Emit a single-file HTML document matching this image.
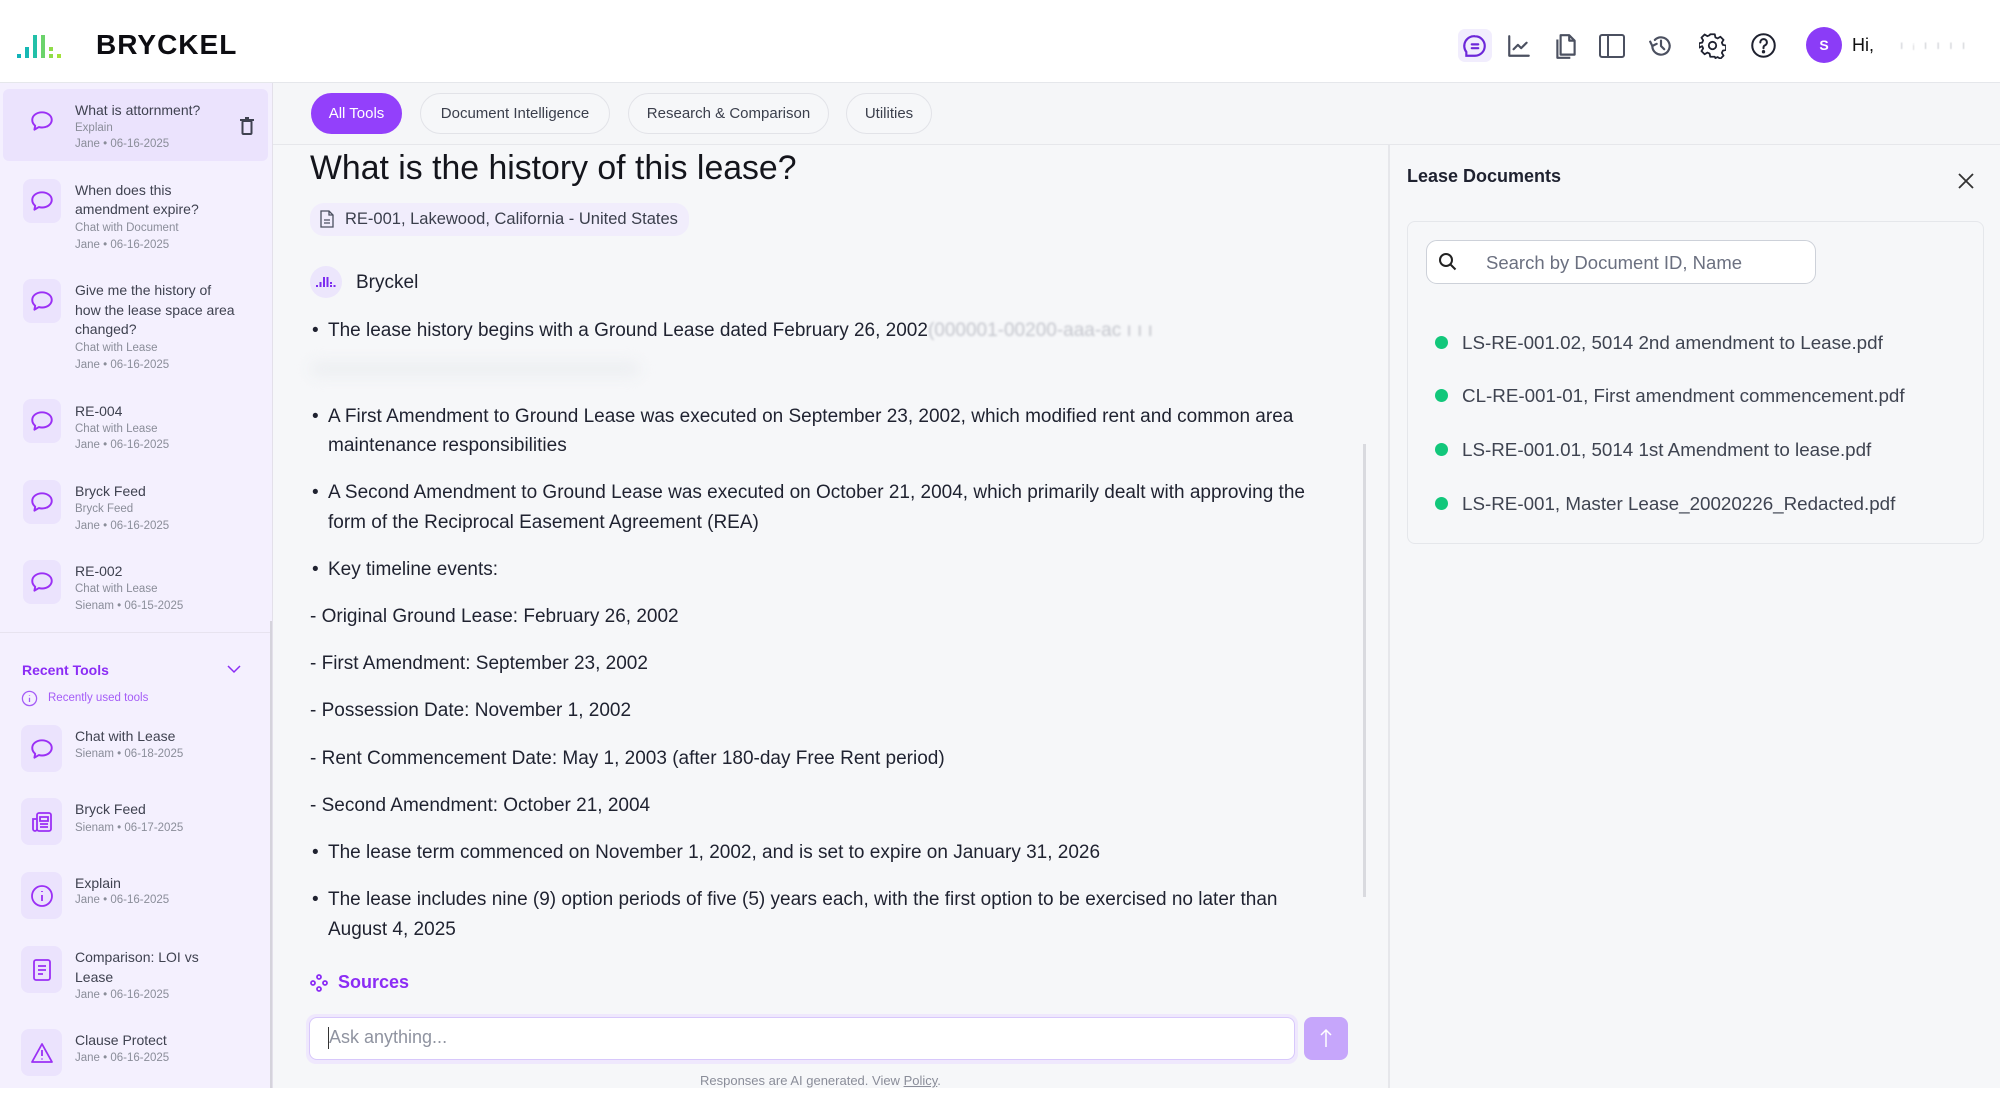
<!DOCTYPE html>
<html><head><meta charset="utf-8">
<style>
*{box-sizing:border-box;margin:0;padding:0}
body{width:2000px;height:1099px;overflow:hidden;background:#fff;font-family:"Liberation Sans",sans-serif;color:#1f2230;position:relative}
.a{position:absolute;white-space:nowrap}
.hdr{position:absolute;left:0;top:0;width:2000px;height:83px;background:#fff;border-bottom:1px solid #e5e7eb}
.side{position:absolute;left:0;top:83px;width:273px;height:1005px;background:#f4f0fe;border-right:1px solid #e3e0ea;overflow:hidden}
.main{position:absolute;left:273px;top:83px;width:1115px;height:1005px;background:#f6f7f9}
.right{position:absolute;left:1388px;top:145px;width:612px;height:943px;background:#f6f7f9;border-left:2px solid #e6e7eb}
.tabs{position:absolute;left:273px;top:83px;width:1727px;height:62px;background:#f5f6f8;border-bottom:1px solid #e6e7eb}
.pill{position:absolute;top:10px;height:41px;border:1px solid #e2e3e8;border-radius:21px;font-size:15px;color:#3b3f4c;display:flex;align-items:center;justify-content:center;background:#f6f7f9}
.ib{position:absolute;left:23px;width:38px;height:44px;background:#ebe3fd;border-radius:8px;display:flex;align-items:center;justify-content:center}
.t{font-size:14px;color:#3f4250}
.s{font-size:11.5px;color:#8a8d99}
.b{font-size:19px;color:#1f2230}
.doc{font-size:18.8px;color:#3f4451}
.dot{position:absolute;left:1435px;width:13px;height:13px;border-radius:50%;background:#12c77b}
</style></head><body>

<div class="hdr"></div>
<svg class="a" style="left:17px;top:32px" width="58" height="28" viewBox="0 0 58 28">
<rect x="0" y="22" width="4" height="4" fill="#12b3b8"/>
<rect x="8" y="15" width="4" height="11" fill="#16b8b4"/>
<rect x="16" y="3" width="4" height="23" fill="#22c0a8"/>
<rect x="24" y="3" width="4" height="23" fill="#6bd36b"/>
<rect x="32" y="15" width="4" height="4" fill="#8fdc48"/>
<rect x="32" y="22" width="4" height="4" fill="#8fdc48"/>
<rect x="40" y="22" width="4" height="4" fill="#a3e23a"/>
</svg>
<div class="a" style="left:96px;top:29px;font-size:28px;font-weight:bold;letter-spacing:1px;color:#0d0d12">BRYCKEL</div>

<div class="a" style="left:1458px;top:29px;width:34px;height:33px;background:#f1edfd;border-radius:7px"></div>
<svg class="a" style="left:1462px;top:33px" width="26" height="26" viewBox="0 0 24 24" fill="none" stroke="#6d28d9" stroke-width="2" stroke-linecap="round"><path d="M12 3a9 9 0 0 1 0 18H4v-3.5A9 9 0 0 1 12 3z"/><path d="M9 10.5h6M9 14h6"/></svg>
<svg class="a" style="left:1506px;top:33px" width="26" height="26" viewBox="0 0 24 24" fill="none" stroke="#4b5060" stroke-width="2" stroke-linecap="round" stroke-linejoin="round"><path d="M3 3v18h18"/><path d="M7 15l4-4 3 3 5-5"/></svg>
<svg class="a" style="left:1553px;top:32px" width="26" height="28" viewBox="0 0 24 26" fill="none" stroke="#4b5060" stroke-width="2" stroke-linejoin="round"><path d="M7 3h8l5 5v13H7z"/><path d="M15 3v5h5"/><path d="M4 7v17h12"/></svg>
<svg class="a" style="left:1598px;top:33px" width="28" height="26" viewBox="0 0 28 26" fill="none" stroke="#4b5060" stroke-width="2"><rect x="2" y="2" width="24" height="22" rx="2"/><path d="M10 2v22"/></svg>
<svg class="a" style="left:1648px;top:33px" width="26" height="26" viewBox="0 0 24 24" fill="none" stroke="#4b5060" stroke-width="2" stroke-linecap="round" stroke-linejoin="round"><path d="M4 12a8 8 0 1 0 2.3-5.6"/><path d="M2 8l2 4 4-2"/><path d="M12 7v5l3 3"/></svg>
<svg class="a" style="left:1699px;top:32px" width="27" height="27" viewBox="0 0 24 24" fill="none" stroke="#1f2230" stroke-width="1.6" stroke-linejoin="round"><path d="M10 2h4l.6 2.8 2 .9 2.4-1.5 2.8 2.8-1.5 2.4.9 2 2.8.6v4l-2.8.6-.9 2 1.5 2.4-2.8 2.8-2.4-1.5-2 .9L14 22h-4l-.6-2.8-2-.9-2.4 1.5-2.8-2.8 1.5-2.4-.9-2L0 14v-4l2.8-.6.9-2-1.5-2.4 2.8-2.8 2.4 1.5 2-.9z"/><circle cx="12" cy="12" r="3.3"/></svg>
<svg class="a" style="left:1750px;top:32px" width="27" height="27" viewBox="0 0 24 24" fill="none" stroke="#1f2230" stroke-width="1.8" stroke-linecap="round"><circle cx="12" cy="12" r="10"/><path d="M9.2 9.3a2.9 2.9 0 1 1 4 2.6c-.8.4-1.2 1-1.2 1.9v.6"/><circle cx="12" cy="17.5" r=".6" fill="#1f2230"/></svg>
<div class="a" style="left:1806px;top:27px;width:36px;height:36px;border-radius:50%;background:#8b3cf7;color:#fff;font-size:14px;font-weight:bold;text-align:center;line-height:36px">S</div>
<div class="a" style="left:1852px;top:35px;font-size:18px;color:#111">Hi,</div>
<div class="a" style="left:1900px;top:38px;font-size:12px;color:#c8cad0;letter-spacing:3px;filter:blur(0.6px)">ı ᵢ ı ı ı ı</div>

<div class="side">
<div class="a" style="left:3px;top:6px;width:265px;height:72px;background:#ebe3fd;border-radius:6px"></div>
<div class="a" style="left:270px;top:538px;width:4px;height:470px;background:#d5d3dc"></div>
<div class="a" style="left:0;top:549px;width:270px;height:1px;background:#e7e3ef"></div>
</div>
<svg width="0" height="0" style="position:absolute"><defs>
<symbol id="bub" viewBox="0 0 24 24"><path d="M12 4c5 0 9 3.1 9 7s-4 7-9 7c-1 0-2-.1-2.9-.4L5 20l.7-3.6C4 15 3 13.1 3 11c0-3.9 4-7 9-7z" fill="none" stroke="#9b30f5" stroke-width="1.8" stroke-linejoin="round"/></symbol>
</defs></svg>
<svg class="a" style="left:29px;top:108px" width="26" height="26"><use href="#bub"/></svg>
<div class="a t" style="left:75px;top:102px">What is attornment?</div>
<div class="a s" style="left:75px;top:122px">Explain</div>
<div class="a s" style="left:75px;top:138px">Jane • 06-16-2025</div>
<svg class="a" style="left:240px;top:117px" width="14" height="18" viewBox="0 0 14 18" fill="none" stroke="#3f4250" stroke-width="2"><path d="M0 3h14M5 1h4"/><rect x="2.5" y="4" width="9" height="13" rx="1"/></svg>

<div class="ib" style="top:179px"><svg width="26" height="26"><use href="#bub"/></svg></div>
<div class="a t" style="left:75px;top:182px">When does this</div>
<div class="a t" style="left:75px;top:201px">amendment expire?</div>
<div class="a s" style="left:75px;top:222px">Chat with Document</div>
<div class="a s" style="left:75px;top:239px">Jane • 06-16-2025</div>

<div class="ib" style="top:279px"><svg width="26" height="26"><use href="#bub"/></svg></div>
<div class="a t" style="left:75px;top:282px">Give me the history of</div>
<div class="a t" style="left:75px;top:302px">how the lease space area</div>
<div class="a t" style="left:75px;top:321px">changed?</div>
<div class="a s" style="left:75px;top:342px">Chat with Lease</div>
<div class="a s" style="left:75px;top:359px">Jane • 06-16-2025</div>

<div class="ib" style="top:399px"><svg width="26" height="26"><use href="#bub"/></svg></div>
<div class="a t" style="left:75px;top:403px">RE-004</div>
<div class="a s" style="left:75px;top:423px">Chat with Lease</div>
<div class="a s" style="left:75px;top:439px">Jane • 06-16-2025</div>

<div class="ib" style="top:480px"><svg width="26" height="26"><use href="#bub"/></svg></div>
<div class="a t" style="left:75px;top:483px">Bryck Feed</div>
<div class="a s" style="left:75px;top:503px">Bryck Feed</div>
<div class="a s" style="left:75px;top:520px">Jane • 06-16-2025</div>

<div class="ib" style="top:560px"><svg width="26" height="26"><use href="#bub"/></svg></div>
<div class="a t" style="left:75px;top:563px">RE-002</div>
<div class="a s" style="left:75px;top:583px">Chat with Lease</div>
<div class="a s" style="left:75px;top:600px">Sienam • 06-15-2025</div>

<div class="a" style="left:22px;top:662px;font-size:14px;font-weight:bold;color:#8b2cf5">Recent Tools</div>
<svg class="a" style="left:226px;top:664px" width="16" height="10" viewBox="0 0 16 10" fill="none" stroke="#8b2cf5" stroke-width="1.5"><path d="M2 2l6 6 6-6"/></svg>
<svg class="a" style="left:21px;top:690px" width="17" height="17" viewBox="0 0 24 24" fill="none" stroke="#a55cf7" stroke-width="1.8"><circle cx="12" cy="12" r="10"/><path d="M12 11v6M12 7v1"/></svg>
<div class="a" style="left:48px;top:692px;font-size:11.5px;color:#a55cf7">Recently used tools</div>

<div class="ib" style="top:725px;left:21px;width:41px;height:47px"><svg width="26" height="26"><use href="#bub"/></svg></div>
<div class="a t" style="left:75px;top:728px">Chat with Lease</div>
<div class="a s" style="left:75px;top:748px">Sienam • 06-18-2025</div>

<div class="ib" style="top:798px;left:21px;width:41px;height:47px"><svg width="24" height="24" viewBox="0 0 24 24" fill="none" stroke="#9b30f5" stroke-width="1.8"><rect x="7" y="3" width="14" height="18" rx="2"/><path d="M7 9H3v10a2 2 0 0 0 4 0M10 7h8v4h-8zM10 14h8M10 17h8"/></svg></div>
<div class="a t" style="left:75px;top:801px">Bryck Feed</div>
<div class="a s" style="left:75px;top:822px">Sienam • 06-17-2025</div>

<div class="ib" style="top:872px;left:21px;width:41px;height:47px"><svg width="24" height="24" viewBox="0 0 24 24" fill="none" stroke="#9b30f5" stroke-width="1.8"><circle cx="12" cy="12" r="10"/><path d="M12 11v6M12 7v1"/></svg></div>
<div class="a t" style="left:75px;top:875px">Explain</div>
<div class="a s" style="left:75px;top:894px">Jane • 06-16-2025</div>

<div class="ib" style="top:946px;left:21px;width:41px;height:47px"><svg width="22" height="24" viewBox="0 0 22 24" fill="none" stroke="#9b30f5" stroke-width="1.8"><rect x="3" y="2" width="16" height="20" rx="2"/><path d="M7 8h8M7 12h8M7 16h5"/></svg></div>
<div class="a t" style="left:75px;top:949px">Comparison: LOI vs</div>
<div class="a t" style="left:75px;top:969px">Lease</div>
<div class="a s" style="left:75px;top:989px">Jane • 06-16-2025</div>

<div class="ib" style="top:1029px;left:21px;width:41px;height:47px"><svg width="24" height="22" viewBox="0 0 24 22" fill="none" stroke="#9b30f5" stroke-width="1.8" stroke-linejoin="round"><path d="M12 2L2 20h20z"/><path d="M12 8v6M12 16.5v1"/></svg></div>
<div class="a t" style="left:75px;top:1032px">Clause Protect</div>
<div class="a s" style="left:75px;top:1052px">Jane • 06-16-2025</div>

<div class="main"></div>
<div class="tabs">
<div class="pill" style="left:38px;width:91px;background:#9340fb;border-color:#9340fb;color:#fff">All Tools</div>
<div class="pill" style="left:147px;width:190px">Document Intelligence</div>
<div class="pill" style="left:355px;width:201px">Research &amp; Comparison</div>
<div class="pill" style="left:573px;width:86px">Utilities</div>
</div>

<div class="a" style="left:310px;top:149px;font-size:33.8px;color:#14151c">What is the history of this lease?</div>
<div class="a" style="left:310px;top:203px;width:379px;height:33px;background:#f1edfc;border-radius:14px"></div>
<svg class="a" style="left:320px;top:210px" width="14" height="18" viewBox="0 0 14 18" fill="none" stroke="#4b5060" stroke-width="1.3"><path d="M1 1h8l4 4v12H1z"/><path d="M9 1v4h4M4 10h6M4 13h6"/></svg>
<div class="a" style="left:345px;top:210px;font-size:16.5px;color:#3b3f4c">RE-001, Lakewood, California - United States</div>

<div class="a" style="left:310px;top:266px;width:32px;height:32px;border-radius:50%;background:#ece6fc"></div>
<svg class="a" style="left:316px;top:276px" width="20" height="12" viewBox="0 0 20 12"><g fill="#7c2cf0"><rect x="0" y="9" width="2" height="2"/><rect x="3.5" y="6" width="2" height="5"/><rect x="7" y="1" width="2" height="10"/><rect x="10.5" y="1" width="2" height="10"/><rect x="14" y="6" width="2" height="2"/><rect x="14" y="9" width="2" height="2"/><rect x="17.5" y="9" width="2" height="2"/></g></svg>
<div class="a" style="left:356px;top:272px;font-size:19px;color:#1f2230">Bryckel</div>

<div class="a b" style="left:312px;top:320px">•</div>
<div class="a b" style="left:328px;top:320px">The lease history begins with a Ground Lease dated February 26, 2002<span style="color:#c4c6cd;filter:blur(1px)">(000001-00200-aaa-ac ı ı ı</span></div>
<div class="a" style="left:310px;top:362px;width:330px;height:14px;background:#eceef1;border-radius:8px;filter:blur(7px)"></div>

<div class="a b" style="left:312px;top:406px">•</div>
<div class="a b" style="left:328px;top:406px">A First Amendment to Ground Lease was executed on September 23, 2002, which modified rent and common area</div>
<div class="a b" style="left:328px;top:435px">maintenance responsibilities</div>
<div class="a b" style="left:312px;top:482px">•</div>
<div class="a b" style="left:328px;top:482px">A Second Amendment to Ground Lease was executed on October 21, 2004, which primarily dealt with approving the</div>
<div class="a b" style="left:328px;top:512px">form of the Reciprocal Easement Agreement (REA)</div>
<div class="a b" style="left:312px;top:559px">•</div>
<div class="a b" style="left:328px;top:559px">Key timeline events:</div>
<div class="a b" style="left:310px;top:606px">- Original Ground Lease: February 26, 2002</div>
<div class="a b" style="left:310px;top:653px">- First Amendment: September 23, 2002</div>
<div class="a b" style="left:310px;top:700px">- Possession Date: November 1, 2002</div>
<div class="a b" style="left:310px;top:748px">- Rent Commencement Date: May 1, 2003 (after 180-day Free Rent period)</div>
<div class="a b" style="left:310px;top:795px">- Second Amendment: October 21, 2004</div>
<div class="a b" style="left:312px;top:842px">•</div>
<div class="a b" style="left:328px;top:842px">The lease term commenced on November 1, 2002, and is set to expire on January 31, 2026</div>
<div class="a b" style="left:312px;top:889px">•</div>
<div class="a b" style="left:328px;top:889px">The lease includes nine (9) option periods of five (5) years each, with the first option to be exercised no later than</div>
<div class="a b" style="left:328px;top:919px">August 4, 2025</div>
<div class="a" style="left:1363px;top:444px;width:3px;height:453px;background:#d9dadf"></div>

<svg class="a" style="left:310px;top:974px" width="18" height="18" viewBox="0 0 18 18" fill="none" stroke="#8b2cf5" stroke-width="1.8"><circle cx="9" cy="3" r="2"/><circle cx="3" cy="9" r="2"/><circle cx="15" cy="9" r="2"/><circle cx="9" cy="15" r="2"/></svg>
<div class="a" style="left:338px;top:972px;font-size:18px;font-weight:bold;color:#8b2cf5">Sources</div>

<div class="a" style="left:306px;top:1014px;width:992px;height:50px;border-radius:10px;background:#efe8fd"></div>
<div class="a" style="left:309px;top:1017px;width:986px;height:43px;border:1px solid #d8c8fb;border-radius:8px;background:#fff"></div>
<div class="a" style="left:328px;top:1027px;width:1px;height:22px;background:#333"></div>
<div class="a" style="left:329px;top:1027px;font-size:18px;color:#8f93a0">Ask anything...</div>
<div class="a" style="left:1304px;top:1017px;width:44px;height:43px;border-radius:8px;background:#c6a6fb"></div>
<svg class="a" style="left:1318px;top:1028px" width="16" height="20" viewBox="0 0 16 20" fill="none" stroke="#fff" stroke-width="1.5"><path d="M8 19V2M3 7l5-5 5 5"/></svg>
<div class="a" style="left:700px;top:1073px;font-size:13px;color:#8a8d99">Responses are AI generated. View <u>Policy</u>.</div>

<div class="right"></div>
<div class="a" style="left:1407px;top:166px;font-size:18px;font-weight:bold;color:#1f2230">Lease Documents</div>
<svg class="a" style="left:1957px;top:172px" width="18" height="18" viewBox="0 0 18 18" stroke="#333" stroke-width="1.8"><path d="M2 2l14 14M16 2L2 16"/></svg>
<div class="a" style="left:1407px;top:221px;width:577px;height:323px;border:1px solid #e5e7eb;border-radius:8px"></div>
<div class="a" style="left:1426px;top:240px;width:390px;height:44px;border:1px solid #cdd1d9;border-radius:11px;background:#fff"></div>
<svg class="a" style="left:1438px;top:252px" width="20" height="20" viewBox="0 0 20 20" fill="none" stroke="#222" stroke-width="2"><circle cx="8" cy="8" r="6"/><path d="M12.5 12.5l5 5"/></svg>
<div class="a" style="left:1486px;top:252px;font-size:18.5px;color:#6b7080">Search by Document ID, Name</div>
<div class="dot" style="top:336px"></div><div class="a doc" style="left:1462px;top:332px">LS-RE-001.02, 5014 2nd amendment to Lease.pdf</div>
<div class="dot" style="top:389px"></div><div class="a doc" style="left:1462px;top:385px">CL-RE-001-01, First amendment commencement.pdf</div>
<div class="dot" style="top:443px"></div><div class="a doc" style="left:1462px;top:439px">LS-RE-001.01, 5014 1st Amendment to lease.pdf</div>
<div class="dot" style="top:497px"></div><div class="a doc" style="left:1462px;top:493px">LS-RE-001, Master Lease_20020226_Redacted.pdf</div>
</body></html>
